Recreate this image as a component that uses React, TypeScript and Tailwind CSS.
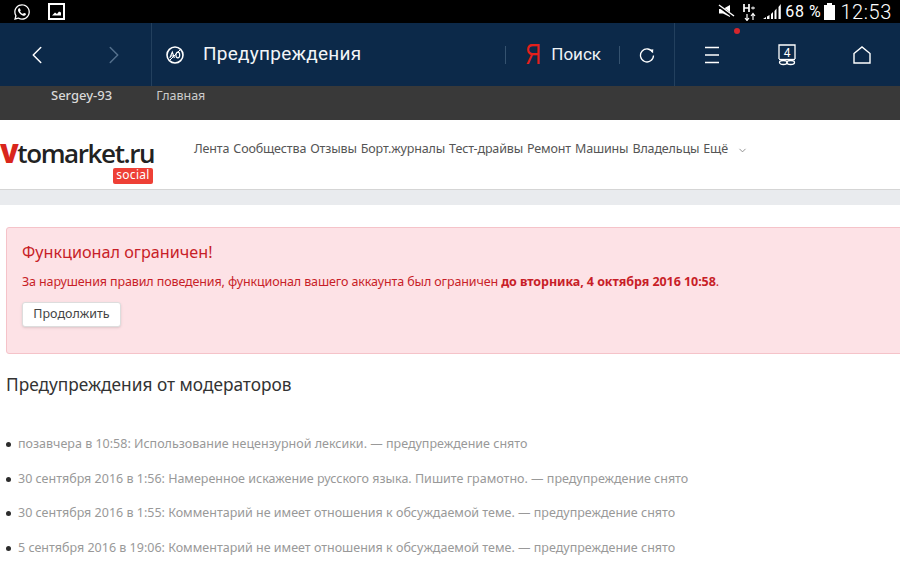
import { ChevronLeft, ChevronRight } from 'lucide-react'
import { FaWhatsapp } from 'react-icons/fa'

const warnings = [
  'позавчера в 10:58: Использование нецензурной лексики. — предупреждение снято',
  '30 сентября 2016 в 1:56: Намеренное искажение русского языка. Пишите грамотно. — предупреждение снято',
  '30 сентября 2016 в 1:55: Комментарий не имеет отношения к обсуждаемой теме. — предупреждение снято',
  '5 сентября 2016 в 19:06: Комментарий не имеет отношения к обсуждаемой теме. — предупреждение снято',
]

const navLinks = ['Лента', 'Сообщества', 'Отзывы', 'Борт.журналы', 'Тест-драйвы', 'Ремонт', 'Машины', 'Владельцы', 'Ещё']

const StatusBar = () => (
  <div className="h-[23px] bg-black flex items-center justify-between text-white font-['Roboto',sans-serif]">
    <div className="flex items-center gap-[17px] pl-[13px]">
      <FaWhatsapp size={18} />
      <svg width="17" height="17" viewBox="0 0 17 17">
        <rect x="1" y="1" width="15" height="15" fill="none" stroke="white" strokeWidth="2" />
        <path d="M4 12.5 L7 9.5 L9 11 L11 8.5 L13 9.5 V12.5 Z" fill="white" />
      </svg>
    </div>
    <div className="flex items-center pr-[8px]">
      <svg width="17" height="15" viewBox="0 0 17 15" className="mr-[8px]">
        <path d="M1 5 H5 L12 1 V13 L5 9.5 H1 Z" fill="white" />
        <path d="M1 2 L16 13" stroke="black" strokeWidth="3" />
        <path d="M1 1 L16 12" stroke="white" strokeWidth="1.4" />
      </svg>
      <svg width="14" height="18" viewBox="0 0 14 18" className="mr-[6px]">
        <path d="M1 1 V9 M6 1 V9 M1 5 H6" stroke="white" strokeWidth="1.7" />
        <path d="M8 5 H12 M10 3.5 V6.5" stroke="white" strokeWidth="1" />
        <path d="M4 11 V17 M2 15 L4 17.5 L6 15 M10 17 V11 M8 13 L10 10.5 L12 13" stroke="white" strokeWidth="1.2" fill="none" />
      </svg>
      <svg width="18" height="17" viewBox="0 0 18 17" className="mr-[4px]">
        <path d="M0 16 L3 14 V16 Z M4 13.5 L6.5 12 V16 H4 Z M8 11 L10 9 V16 H8 Z M11.5 8 L13.5 5.5 V16 H11.5 Z M15.5 4 L17.8 1 V16 H15.5 Z" fill="white" />
      </svg>
      <span className="text-[16px] tracking-[0.6px] mr-[3px]">68 %</span>
      <div className="relative w-[11px] h-[15px] bg-white mr-[5px] mt-[2px]">
        <div className="absolute top-[-2px] left-[3px] w-[5px] h-[2px] bg-white" />
      </div>
      <span className="text-[20px] font-light tracking-[0.6px] leading-none">12:53</span>
    </div>
  </div>
)

const BrowserBar = () => (
  <div className="h-[63px] bg-[#0c2949] flex items-stretch text-white font-['Roboto',sans-serif]">
    <div className="w-[152px] flex items-center border-r border-[#23405e] pl-[22px] gap-[47px]">
      <ChevronLeft size={30} strokeWidth={1.2} />
      <ChevronRight size={30} strokeWidth={1.2} className="text-[#54708c]" />
    </div>
    <div className="flex items-center flex-1 pl-[13px]">
      <svg width="20" height="20" viewBox="0 0 20 20">
        <circle cx="10" cy="10" r="8" fill="none" stroke="white" strokeWidth="1.6" />
        <path d="M4.5 15.5 L15.5 4.5" stroke="white" strokeWidth="1" />
        <ellipse cx="12.8" cy="10" rx="1.9" ry="2.8" fill="none" stroke="white" strokeWidth="1.2" />
        <path d="M4.8 13 L7.3 7 L9.4 13 M5.8 11 H8.8" fill="none" stroke="white" strokeWidth="1.1" />
      </svg>
      <span className="ml-[18px] text-[19px] tracking-[0.25px] text-[#f2f5f8]">Предупреждения</span>
      <div className="ml-auto flex items-center">
        <div className="w-px h-[18px] bg-[#35526f]" />
        <span className="ml-[17px] w-[18px] inline-block scale-x-75 text-center text-[#e3201b] text-[29px] leading-none font-['Liberation_Sans',sans-serif]">Я</span>
        <span className="ml-[10px] text-[17px] text-[#eef2f6]">Поиск</span>
        <div className="ml-[18px] w-px h-[18px] bg-[#35526f]" />
        <svg width="16" height="16" viewBox="0 0 16 16" className="ml-[19px] mr-[19px]">
          <path d="M13.8 5.5 A6.5 6.5 0 1 0 14.5 8.5" fill="none" stroke="white" strokeWidth="1.3" />
          <path d="M10.5 3 L14 5.8 L14.3 2.2 Z" fill="white" />
        </svg>
      </div>
    </div>
    <div className="relative w-[226px] flex items-center border-l border-[#23405e]">
      <svg width="15" height="18" viewBox="0 0 15 18" className="ml-[30px]">
        <path d="M0 1.5 H14 M0 9 H14 M0 16.5 H14" stroke="white" strokeWidth="1.3" />
      </svg>
      <div className="absolute top-[5px] left-[59px] w-[6px] h-[6px] rounded-full bg-[#d4262c]" />
      <svg width="18" height="22" viewBox="0 0 18 22" className="ml-[58px]">
        <path d="M1 15 V1 H17 V15" fill="none" stroke="white" strokeWidth="1.3" />
        <text x="9" y="13" textAnchor="middle" fontSize="12" fill="white" fontFamily="Roboto, sans-serif">4</text>
        <path d="M1 15.5 H17" stroke="white" strokeWidth="1.3" />
        <ellipse cx="5.3" cy="18.5" rx="3.8" ry="2" fill="none" stroke="white" strokeWidth="1.3" />
        <ellipse cx="12.7" cy="18.5" rx="3.8" ry="2" fill="none" stroke="white" strokeWidth="1.3" />
      </svg>
      <svg width="18" height="18" viewBox="0 0 18 18" className="ml-[57px]">
        <path d="M1 7.5 L9 1 L17 7.5 V17 H1 Z" fill="none" stroke="white" strokeWidth="1.4" />
      </svg>
    </div>
  </div>
)

const SiteHeader = () => (
  <>
    <div className="h-[34px] bg-[#393939] flex items-start text-[13px] text-[#d8d8d8] font-['Noto_Sans',sans-serif]">
      <span className="ml-[51px] font-medium leading-[19px]">Sergey-93</span>
      <span className="ml-[44px] text-[12.5px] text-[#cccccc] leading-[19px]">Главная</span>
    </div>
    <div className="h-[70px] bg-white border-b border-[#d5d5d5] flex">
      <div className="relative w-[194px] shrink-0 overflow-hidden">
        <div className="absolute left-0 top-[21px] flex items-baseline font-['Open_Sans',sans-serif] text-[26px] leading-[24px] font-semibold tracking-[-1.4px] text-[#222222]">
          <span className="text-[#d9261c] font-extrabold text-[27px]">V</span>
          <span>tomarket.ru</span>
        </div>
        <div className="absolute left-[113px] top-[48px] w-[40px] h-[16px] rounded-[2px] bg-[#ee4036] text-white text-[12px] leading-[14px] tracking-[0.3px] text-center font-['Noto_Sans',sans-serif]">
          social
        </div>
      </div>
      <nav className="flex items-center gap-[4px] h-[58px] text-[12.5px] tracking-[-0.15px] text-[#555555] font-['Noto_Sans',sans-serif]">
        {navLinks.map((link) => (
          <span key={link}>{link}</span>
        ))}
        <ChevronRight size={11} className="ml-[5px] mt-[2px] rotate-90 text-[#888888]" />
      </nav>
    </div>
    <div className="h-[15px] bg-[#e9ebee]" />
  </>
)

export default function App() {
  return (
    <div className="w-[900px] h-[562px] overflow-hidden bg-white">
      <StatusBar />
      <BrowserBar />
      <SiteHeader />
      <main className="pt-[22px] pl-[6px] font-['Noto_Sans',sans-serif]">
        <div className="w-[910px] h-[127px] bg-[#fde2e6] border border-[#f5c3c9] rounded-[3px] pl-[15px] pt-[12px] text-[#c81e28]">
          <h2 className="text-[16.2px] leading-[24px]">Функционал ограничен!</h2>
          <p className="mt-[8px] text-[12.5px] tracking-[-0.12px] leading-[20px]">
            За нарушения правил поведения, функционал вашего аккаунта был ограничен{' '}
            <b className="font-bold tracking-[-0.06px]">до вторника, 4 октября 2016 10:58</b>.
          </p>
          <button className="block mt-[10px] w-[99px] h-[25px] bg-white border border-[#dddddd] rounded-[3px] text-[12.5px] text-[#444444] shadow-sm">
            Продолжить
          </button>
        </div>
        <h3 className="mt-[19px] text-[17.3px] leading-[24px] text-[#333333]">Предупреждения от модераторов</h3>
        <ul className="mt-[37px] flex flex-col gap-[14.5px] text-[12.5px] leading-[20px] text-[#999999]">
          {warnings.map((item) => (
            <li key={item} className="flex items-center">
              <span className="w-[5px] h-[5px] rounded-full bg-[#2c2c2c] mr-[7px] mt-[1px]" />
              {item}
            </li>
          ))}
        </ul>
      </main>
    </div>
  )
}
